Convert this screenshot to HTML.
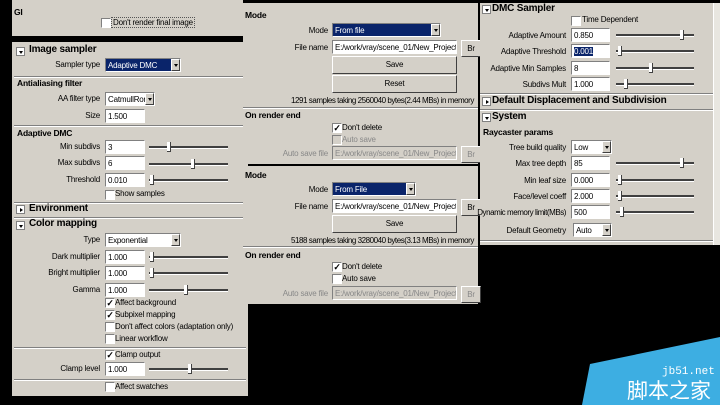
<!DOCTYPE html>
<html><head><meta charset="utf-8"><style>
*{margin:0;padding:0;box-sizing:border-box}
body{width:720px;height:405px;background:#000;position:relative;overflow:hidden;font-family:"Liberation Sans",sans-serif;font-size:8px;letter-spacing:-0.2px;color:#000}
.p{position:absolute;background:#d4d0c8}
.a{position:absolute;white-space:nowrap}
.l{position:absolute;white-space:nowrap;text-align:right;width:120px}
.b{font-weight:bold;font-size:8.5px}
.h{font-weight:bold;font-size:10px}
.in{position:absolute;background:#fff;border-top:1px solid #808080;border-left:1px solid #808080;border-bottom:1px solid #fff;border-right:1px solid #fff;height:14px;padding:1px 2px;line-height:11px;overflow:hidden;white-space:nowrap}
.dis{background:#d4d0c8;color:#888}
.sel{background:#0a246a;color:#fff}
.arr{position:absolute;right:0;top:0;width:9px;height:12px;background:#d4d0c8;border:1px solid;border-color:#fff #404040 #404040 #fff}
.arr:after{content:"";position:absolute;left:1.5px;top:4px;border-left:2.5px solid transparent;border-right:2.5px solid transparent;border-top:3px solid #000}
.cb{position:absolute;width:10px;height:10px;background:#fff;border-top:1px solid #808080;border-left:1px solid #808080;border-bottom:1px solid #fff;border-right:1px solid #fff;font-size:9px;line-height:8px;text-align:center;font-weight:bold}
.sl{position:absolute;height:3px;border-top:2px solid #404040;border-bottom:1px solid #fff}
.th{position:absolute;top:-6px;width:4px;height:10px;background:#fff;border-right:1px solid #404040;border-bottom:1px solid #404040}
.sep{position:absolute;height:2px;border-top:1px solid #808080;border-bottom:1px solid #fff}
.tb{position:absolute;width:9px;height:9px;background:#fff;border:1px solid #808080}
.tb.d:after{content:"";position:absolute;left:1.5px;top:2.5px;border-left:2.5px solid transparent;border-right:2.5px solid transparent;border-top:3px solid #000}
.tb.r:after{content:"";position:absolute;left:2.5px;top:1.5px;border-top:2.5px solid transparent;border-bottom:2.5px solid transparent;border-left:3px solid #000}
.btn{position:absolute;background:#d4d0c8;border:1px solid;border-color:#fff #404040 #404040 #fff;text-align:center;line-height:15px;overflow:hidden}
.sm{letter-spacing:-0.45px}
</style></head><body>

<div class="p" style="left:12px;top:0;width:231px;height:36px">
<div class="a b" style="left:2px;top:7px">GI</div>
<div class="cb" style="left:89px;top:18px"></div>
<div class="a" style="left:99px;top:17px;border:1px dotted #555;padding:0 1px">Don't render final image</div>
</div>

<div class="p" style="left:12px;top:42px;width:236px;height:354px">
<div class="tb d" style="left:4px;top:5px"></div><div class="a h" style="left:17px;top:2px">Image sampler</div>
<div class="l" style="left:-32px;top:18px">Sampler type</div>
<div class="in sel" style="left:93px;top:16px;width:76px">Adaptive DMC<div class="arr"></div></div>
<div class="sep" style="left:2px;top:34px;width:232px"></div>
<div class="a b" style="left:5px;top:36px">Antialiasing filter</div>
<div class="l" style="left:-32px;top:52px">AA filter type</div>
<div class="in" style="left:93px;top:50px;width:50px">CatmullRom<div class="arr"></div></div>
<div class="l" style="left:-32px;top:69px">Size</div>
<div class="in" style="left:93px;top:67px;width:40px">1.500</div>
<div class="sep" style="left:2px;top:83px;width:232px"></div>
<div class="a b" style="left:5px;top:86px">Adaptive DMC</div>
<div class="l" style="left:-32px;top:100px">Min subdivs</div>
<div class="in" style="left:93px;top:98px;width:40px">3</div>
<div class="sl" style="left:137px;top:104px;width:79px"><div class="th" style="left:18px"></div></div>
<div class="l" style="left:-32px;top:116px">Max subdivs</div>
<div class="in" style="left:93px;top:114px;width:40px">6</div>
<div class="sl" style="left:137px;top:121px;width:79px"><div class="th" style="left:42px"></div></div>
<div class="l" style="left:-32px;top:133px">Threshold</div>
<div class="in" style="left:93px;top:131px;width:40px">0.010</div>
<div class="sl" style="left:137px;top:137px;width:79px"><div class="th" style="left:1px"></div></div>
<div class="cb" style="left:93px;top:148px"></div><div class="a" style="left:103px;top:147px">Show samples</div>
<div class="sep" style="left:2px;top:160px;width:232px"></div>
<div class="tb r" style="left:4px;top:163px"></div><div class="a h" style="left:17px;top:161px">Environment</div>
<div class="sep" style="left:2px;top:175px;width:232px"></div>
<div class="tb d" style="left:4px;top:179px"></div><div class="a h" style="left:17px;top:176px">Color mapping</div>
<div class="l" style="left:-32px;top:193px">Type</div>
<div class="in" style="left:93px;top:191px;width:76px">Exponential<div class="arr"></div></div>
<div class="l" style="left:-32px;top:210px">Dark multiplier</div>
<div class="in" style="left:93px;top:208px;width:40px">1.000</div>
<div class="sl" style="left:137px;top:214px;width:79px"><div class="th" style="left:1px"></div></div>
<div class="l" style="left:-32px;top:226px">Bright multiplier</div>
<div class="in" style="left:93px;top:224px;width:40px">1.000</div>
<div class="sl" style="left:137px;top:230px;width:79px"><div class="th" style="left:1px"></div></div>
<div class="l" style="left:-32px;top:243px">Gamma</div>
<div class="in" style="left:93px;top:241px;width:40px">1.000</div>
<div class="sl" style="left:137px;top:247px;width:79px"><div class="th" style="left:35px"></div></div>
<div class="cb" style="left:93px;top:256px">✓</div><div class="a" style="left:103px;top:256px">Affect background</div>
<div class="cb" style="left:93px;top:268px">✓</div><div class="a" style="left:103px;top:268px">Subpixel mapping</div>
<div class="cb" style="left:93px;top:280px"></div><div class="a" style="left:103px;top:280px">Don't affect colors (adaptation only)</div>
<div class="cb" style="left:93px;top:292px"></div><div class="a" style="left:103px;top:292px">Linear workflow</div>
<div class="sep" style="left:2px;top:305px;width:232px"></div>
<div class="cb" style="left:93px;top:308px">✓</div><div class="a" style="left:103px;top:308px">Clamp output</div>
<div class="l" style="left:-32px;top:322px">Clamp level</div>
<div class="in" style="left:93px;top:320px;width:40px">1.000</div>
<div class="sl" style="left:137px;top:326px;width:79px"><div class="th" style="left:39px"></div></div>
<div class="sep" style="left:2px;top:337px;width:232px"></div>
<div class="cb" style="left:93px;top:340px"></div><div class="a" style="left:103px;top:340px">Affect swatches</div>
</div>

<div class="p" style="left:243px;top:3px;width:235px;height:161px">
<div class="a b" style="left:2px;top:7px">Mode</div>
<div class="l" style="left:-35px;top:23px">Mode</div>
<div class="in sel" style="left:89px;top:20px;width:109px">From file<div class="arr"></div></div>
<div class="l" style="left:-35px;top:40px">File name</div>
<div class="in" style="left:89px;top:37px;width:125px">E:/work/vray/scene_01/New_Project/scer</div>
<div class="btn" style="left:218px;top:37px;width:20px">Br</div>
<div class="btn" style="left:89px;top:53px;width:125px;height:18px">Save</div>
<div class="btn" style="left:89px;top:72px;width:125px;height:18px">Reset</div>
<div class="a sm" style="left:48px;top:93px">1291 samples taking 2560040 bytes(2.44 MBs) in memory</div>
<div class="sep" style="left:0;top:104px;width:235px"></div>
<div class="a b" style="left:2px;top:107px">On render end</div>
<div class="cb" style="left:89px;top:120px">✓</div><div class="a" style="left:99px;top:120px">Don't delete</div>
<div class="cb" style="left:89px;top:132px;background:#d4d0c8"></div><div class="a" style="left:99px;top:132px;color:#888">Auto save</div>
<div class="l" style="left:-35px;top:146px;color:#888">Auto save file</div>
<div class="in dis" style="left:89px;top:143px;width:125px">E:/work/vray/scene_01/New_Project/scer</div>
<div class="btn" style="left:218px;top:143px;width:20px;color:#888">Br</div>
</div>

<div class="p" style="left:243px;top:166px;width:235px;height:138px">
<div class="a b" style="left:2px;top:4px">Mode</div>
<div class="l" style="left:-35px;top:19px">Mode</div>
<div class="in sel" style="left:89px;top:16px;width:84px">From File<div class="arr"></div></div>
<div class="l" style="left:-35px;top:36px">File name</div>
<div class="in" style="left:89px;top:33px;width:125px">E:/work/vray/scene_01/New_Project/scer</div>
<div class="btn" style="left:218px;top:33px;width:20px">Br</div>
<div class="btn" style="left:89px;top:49px;width:125px;height:18px">Save</div>
<div class="a sm" style="left:48px;top:70px">5188 samples taking 3280040 bytes(3.13 MBs) in memory</div>
<div class="sep" style="left:0;top:80px;width:235px"></div>
<div class="a b" style="left:2px;top:84px">On render end</div>
<div class="cb" style="left:89px;top:96px">✓</div><div class="a" style="left:99px;top:96px">Don't delete</div>
<div class="cb" style="left:89px;top:108px"></div><div class="a" style="left:99px;top:108px">Auto save</div>
<div class="l" style="left:-35px;top:123px;color:#888">Auto save file</div>
<div class="in dis" style="left:89px;top:120px;width:125px">E:/work/vray/scene_01/New_Project/scer</div>
<div class="btn" style="left:218px;top:120px;width:20px;color:#888">Br</div>
</div>

<div class="p" style="left:480px;top:3px;width:240px;height:242px">
<div class="tb d" style="left:2px;top:2px"></div><div class="a h" style="left:12px;top:0">DMC Sampler</div>
<div class="cb" style="left:91px;top:13px"></div><div class="a" style="left:102px;top:12px">Time Dependent</div>
<div class="l" style="left:-34px;top:28px">Adaptive Amount</div>
<div class="in" style="left:91px;top:25px;width:39px">0.850</div>
<div class="sl" style="left:136px;top:31px;width:78px"><div class="th" style="left:64px"></div></div>
<div class="l" style="left:-34px;top:44px">Adaptive Threshold</div>
<div class="in" style="left:91px;top:41px;width:39px"><span class="sel">0.001</span></div>
<div class="sl" style="left:136px;top:47px;width:78px"><div class="th" style="left:2px"></div></div>
<div class="l" style="left:-34px;top:61px">Adaptive Min Samples</div>
<div class="in" style="left:91px;top:58px;width:39px">8</div>
<div class="sl" style="left:136px;top:64px;width:78px"><div class="th" style="left:33px"></div></div>
<div class="l" style="left:-34px;top:77px">Subdivs Mult</div>
<div class="in" style="left:91px;top:74px;width:39px">1.000</div>
<div class="sl" style="left:136px;top:80px;width:78px"><div class="th" style="left:8px"></div></div>
<div class="sep" style="left:0;top:90px;width:234px"></div>
<div class="tb r" style="left:2px;top:94px"></div><div class="a h" style="left:12px;top:92px">Default Displacement and Subdivision</div>
<div class="sep" style="left:0;top:106px;width:234px"></div>
<div class="tb d" style="left:2px;top:110px"></div><div class="a h" style="left:12px;top:108px">System</div>
<div class="a b" style="left:3px;top:124px">Raycaster params</div>
<div class="l" style="left:-34px;top:140px">Tree build quality</div>
<div class="in" style="left:91px;top:137px;width:41px">Low<div class="arr"></div></div>
<div class="l" style="left:-34px;top:156px">Max tree depth</div>
<div class="in" style="left:91px;top:153px;width:39px">85</div>
<div class="sl" style="left:136px;top:159px;width:78px"><div class="th" style="left:64px"></div></div>
<div class="l" style="left:-34px;top:173px">Min leaf size</div>
<div class="in" style="left:91px;top:170px;width:39px">0.000</div>
<div class="sl" style="left:136px;top:176px;width:78px"><div class="th" style="left:2px"></div></div>
<div class="l" style="left:-34px;top:189px">Face/level coeff</div>
<div class="in" style="left:91px;top:186px;width:39px">2.000</div>
<div class="sl" style="left:136px;top:192px;width:78px"><div class="th" style="left:2px"></div></div>
<div class="l sm" style="left:-34px;top:205px">Dynamic memory limit(MBs)</div>
<div class="in" style="left:91px;top:202px;width:39px">500</div>
<div class="sl" style="left:136px;top:208px;width:78px"><div class="th" style="left:4px"></div></div>
<div class="l" style="left:-34px;top:223px">Default Geometry</div>
<div class="in" style="left:93px;top:220px;width:39px">Auto<div class="arr"></div></div>
<div class="sep" style="left:0;top:237px;width:234px"></div>
<div style="position:absolute;left:233px;top:0;width:7px;height:242px;background:#e8e6e0;border-left:1px solid #fff"></div>
</div>

<svg style="position:absolute;left:0;top:0" width="720" height="405"><polygon points="590,364 720,337 720,405 582,405" fill="#3daee2"/></svg>
<div class="a" style="left:662px;top:366px;color:#fff;font-family:'Liberation Mono',monospace;font-size:11px;letter-spacing:0">jb51.net</div>
<div class="a" style="left:627px;top:380px;color:#fff;font-family:'Liberation Sans','Noto Sans CJK SC',sans-serif;font-size:21px;line-height:24px;letter-spacing:0">脚本之家</div>
</body></html>
